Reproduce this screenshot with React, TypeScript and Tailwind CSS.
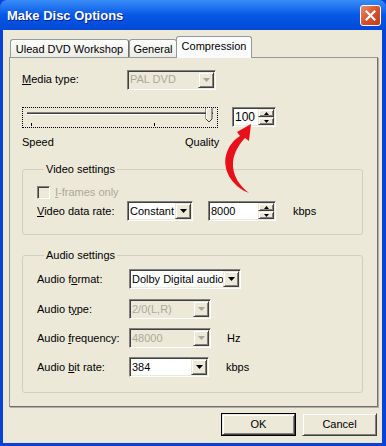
import React from 'react';

const FONT = { fontFamily: '"Liberation Sans", Arial, sans-serif' };

const sunken =
  'border border-t-[#808080] border-l-[#808080] border-b-white border-r-white shadow-[inset_1px_1px_0_#404040,inset_-1px_-1px_0_#ECE9D8]';
const raised =
  'border border-t-[#ECE9D8] border-l-[#ECE9D8] border-b-[#404040] border-r-[#404040] shadow-[inset_1px_1px_0_#ffffff,inset_-1px_-1px_0_#808080] bg-[#ECE9D8]';

const Tri: React.FC<{ disabled?: boolean; up?: boolean; w?: number; h?: number }> = ({ disabled, up, w = 7, h = 4 }) => (
  <svg width={w} height={h} viewBox={`0 0 ${w} ${h}`}>
    <polygon
      points={up ? `0,${h} ${w},${h} ${w / 2},0` : `0,0 ${w},0 ${w / 2},${h}`}
      fill={disabled ? '#ACA899' : '#000'}
    />
  </svg>
);

const Combo: React.FC<{ value: string; width: number; disabled?: boolean }> = ({ value, width, disabled }) => (
  <div
    className={`${sunken} h-[20px] flex items-stretch ${disabled ? 'bg-[#ECE9D8]' : 'bg-white'}`}
    style={{ width }}
  >
    <div className={`flex-1 min-w-0 flex items-center pl-[2px] whitespace-nowrap ${disabled ? 'text-[#ACA899]' : 'text-black'}`}>
      {value}
    </div>
    <div className={`${raised} w-[16px] shrink-0 my-[1px] mr-[1px] flex items-center justify-center`}>
      <Tri disabled={disabled} />
    </div>
  </div>
);

const Spin: React.FC<{ value: string; width: number; big?: boolean }> = ({ value, width, big }) => (
  <div className={`${sunken} h-[20px] flex items-stretch bg-white`} style={{ width }}>
    <div className={`flex-1 min-w-0 flex items-center pl-[2px] text-black ${big ? 'text-[12px]' : 'text-[11px]'}`}>{value}</div>
    <div className="w-[16px] shrink-0 my-[1px] mr-[1px] flex flex-col">
      <div className={`${raised} flex-1 flex items-center justify-center`}>
        <Tri up w={5} h={3} />
      </div>
      <div className={`${raised} flex-1 flex items-center justify-center`}>
        <Tri w={5} h={3} />
      </div>
    </div>
  </div>
);

const Label: React.FC<{ pre: string; u: string; post: string; width?: number; gray?: boolean }> = ({ pre, u, post, width, gray }) => (
  <div className={`flex items-center ${gray ? 'text-[#ACA899]' : 'text-black'}`} style={{ width }}>
    <span>
      {pre}
      <span className="underline">{u}</span>
      {post}
    </span>
  </div>
);

const Slider: React.FC = () => (
  <div className="w-[196px] h-[21px] border border-dotted border-black">
    <svg width="194" height="19" viewBox="0 0 194 19">
      <rect x="4" y="4" width="186" height="1" fill="#808080" />
      <rect x="4" y="5" width="186" height="1" fill="#404040" />
      <rect x="4" y="6" width="186" height="1" fill="#ffffff" />
      <rect x="8" y="15" width="1" height="3" fill="#000" />
      <rect x="131" y="15" width="1" height="3" fill="#000" />
      <polygon points="183,0 189,0 189,11 186,14 183,11" fill="#ECE9D8" stroke="#404040" strokeWidth="1" />
      <polyline points="183.5,11 183.5,0.5 188.5,0.5" fill="none" stroke="#ffffff" />
    </svg>
  </div>
);

const Group: React.FC<{ title: string; height: number; children: React.ReactNode }> = ({ title, height, children }) => (
  <fieldset className="w-[341px] border border-[#D0D0BF] rounded-[3px] pl-[14px] pr-0 pb-0 m-0" style={{ height }}>
    <legend className="ml-[7px] px-[2px] leading-[14px] text-[#000]">{title}</legend>
    {children}
  </fieldset>
);

const Tab: React.FC<{ label: string; width: number; active?: boolean }> = ({ label, width, active }) => (
  <div
    style={{ width }}
    className={
      active
        ? 'h-[22px] -mb-[1px] flex items-center justify-center bg-[#FCFCFE] border border-b-0 border-[#919B9C] rounded-t-[3px] relative z-10 -ml-[1px] pb-[3px]'
        : 'h-[18px] flex items-center justify-center bg-gradient-to-b from-[#FEFEFE] to-[#ECEBE6] border border-b-0 border-[#919B9C] border-r-[#6f6f6f] rounded-t-[3px] pt-[1px]'
    }
  >
    {label}
  </div>
);

export default function App() {
  return (
    <div className="w-[386px] h-[446px] bg-[#0842D8] flex flex-col relative text-[11px] text-black" style={FONT}>
      {/* title bar */}
      <div className="h-[30px] rounded-t-[7px] bg-gradient-to-b from-[#3A8CF6] via-[#0558E7] to-[#0449D6] flex items-center justify-between pl-[7px] pr-[5px]">
        <span className="text-white font-bold text-[13px] [text-shadow:1px_1px_0_#0A1F8F] pt-[1px]">Make Disc Options</span>
        <div className="w-[21px] h-[21px] rounded-[3px] border border-white bg-gradient-to-br from-[#E98A6E] via-[#D8532B] to-[#C23B16] flex items-center justify-center">
          <svg width="11" height="11" viewBox="0 0 11 11">
            <path d="M1.5 1.5 L9.5 9.5 M9.5 1.5 L1.5 9.5" stroke="#fff" strokeWidth="2.2" strokeLinecap="square" />
          </svg>
        </div>
      </div>

      {/* body */}
      <div className="flex-1 ml-[3px] mr-[4px] mb-[3px] bg-[#ECE9D8] flex flex-col">
        {/* tabs */}
        <div className="pl-[7px] mt-[9px] flex items-end h-[18px]">
          <Tab label="Ulead DVD Workshop" width={119} />
          <Tab label="General" width={48} />
          <Tab label="Compression" width={76} active />
        </div>

        {/* panel */}
        <div className="ml-[6px] w-[369px] h-[350px] border border-[#919B9C] border-r-[#6f6f6f] border-b-[#6f6f6f] shadow-[1px_1px_0_#b0b0a8] pl-[12px] flex flex-col">
          <div className="mt-[11px] h-[21px] flex items-center">
            <Label pre="" u="M" post="edia type:" width={105} />
            <Combo value="PAL DVD" width={89} disabled />
          </div>

          <div className="mt-[17px] h-[21px] flex items-start">
            <Slider />
            <div className="ml-[14px]">
              <Spin value="100" width={44} big />
            </div>
          </div>

          <div className="mt-[7px] h-[14px] flex items-center">
            <span className="w-[163px]">Speed</span>
            <span>Quality</span>
          </div>

          <div className="mt-[13px]">
            <Group title="Video settings" height={73}>
              <div className="mt-[10px] h-[13px] flex items-center">
                <div className={`${sunken} w-[13px] h-[13px] bg-[#ECE9D8]`} />
                <span className="ml-[5px] text-[#ACA899]">
                  <span className="underline">I</span>-frames only
                </span>
              </div>
              <div className="mt-[2px] h-[20px] flex items-center">
                <Label pre="" u="V" post="ideo data rate:" width={90} />
                <Combo value="Constant" width={66} />
                <div className="ml-[15px]">
                  <Spin value="8000" width={68} />
                </div>
                <span className="ml-[17px]">kbps</span>
              </div>
            </Group>
          </div>

          <div className="mt-[13px]">
            <Group title="Audio settings" height={145}>
              <div className="mt-[7px] h-[20px] flex items-center">
                <Label pre="Audio f" u="o" post="rmat:" width={92} />
                <Combo value="Dolby Digital audio" width={112} />
              </div>
              <div className="mt-[10px] h-[20px] flex items-center">
                <Label pre="Audio t" u="y" post="pe:" width={92} />
                <Combo value="2/0(L,R)" width={82} disabled />
              </div>
              <div className="mt-[9px] h-[20px] flex items-center">
                <Label pre="Audio " u="f" post="requency:" width={92} />
                <Combo value="48000" width={82} disabled />
                <span className="ml-[16px]">Hz</span>
              </div>
              <div className="mt-[9px] h-[20px] flex items-center">
                <Label pre="Audio " u="b" post="it rate:" width={92} />
                <Combo value="384" width={80} />
                <span className="ml-[17px]">kbps</span>
              </div>
            </Group>
          </div>
        </div>

        {/* buttons */}
        <div className="mt-[6px] flex justify-end gap-[6px] pr-[5px]">
          <div className="w-[75px] h-[23px] border border-black flex">
            <div className={`${raised} flex-1 flex items-center justify-center`}>OK</div>
          </div>
          <div className={`${raised} w-[75px] h-[23px] flex items-center justify-center`}>Cancel</div>
        </div>
      </div>

      {/* red annotation arrow */}
      <svg className="absolute left-0 top-0 pointer-events-none" width="386" height="446" viewBox="0 0 386 446">
        <path
          d="M249 193 C 231 186, 221 168, 227 152 C 230 144, 235 139, 240 136 L 237 132 L 251 124 L 249 141 L 245 138 C 240 143, 234 152, 233 162 C 232 176, 240 186, 249 193 Z"
          fill="#E8101A"
        />
      </svg>
    </div>
  );
}
